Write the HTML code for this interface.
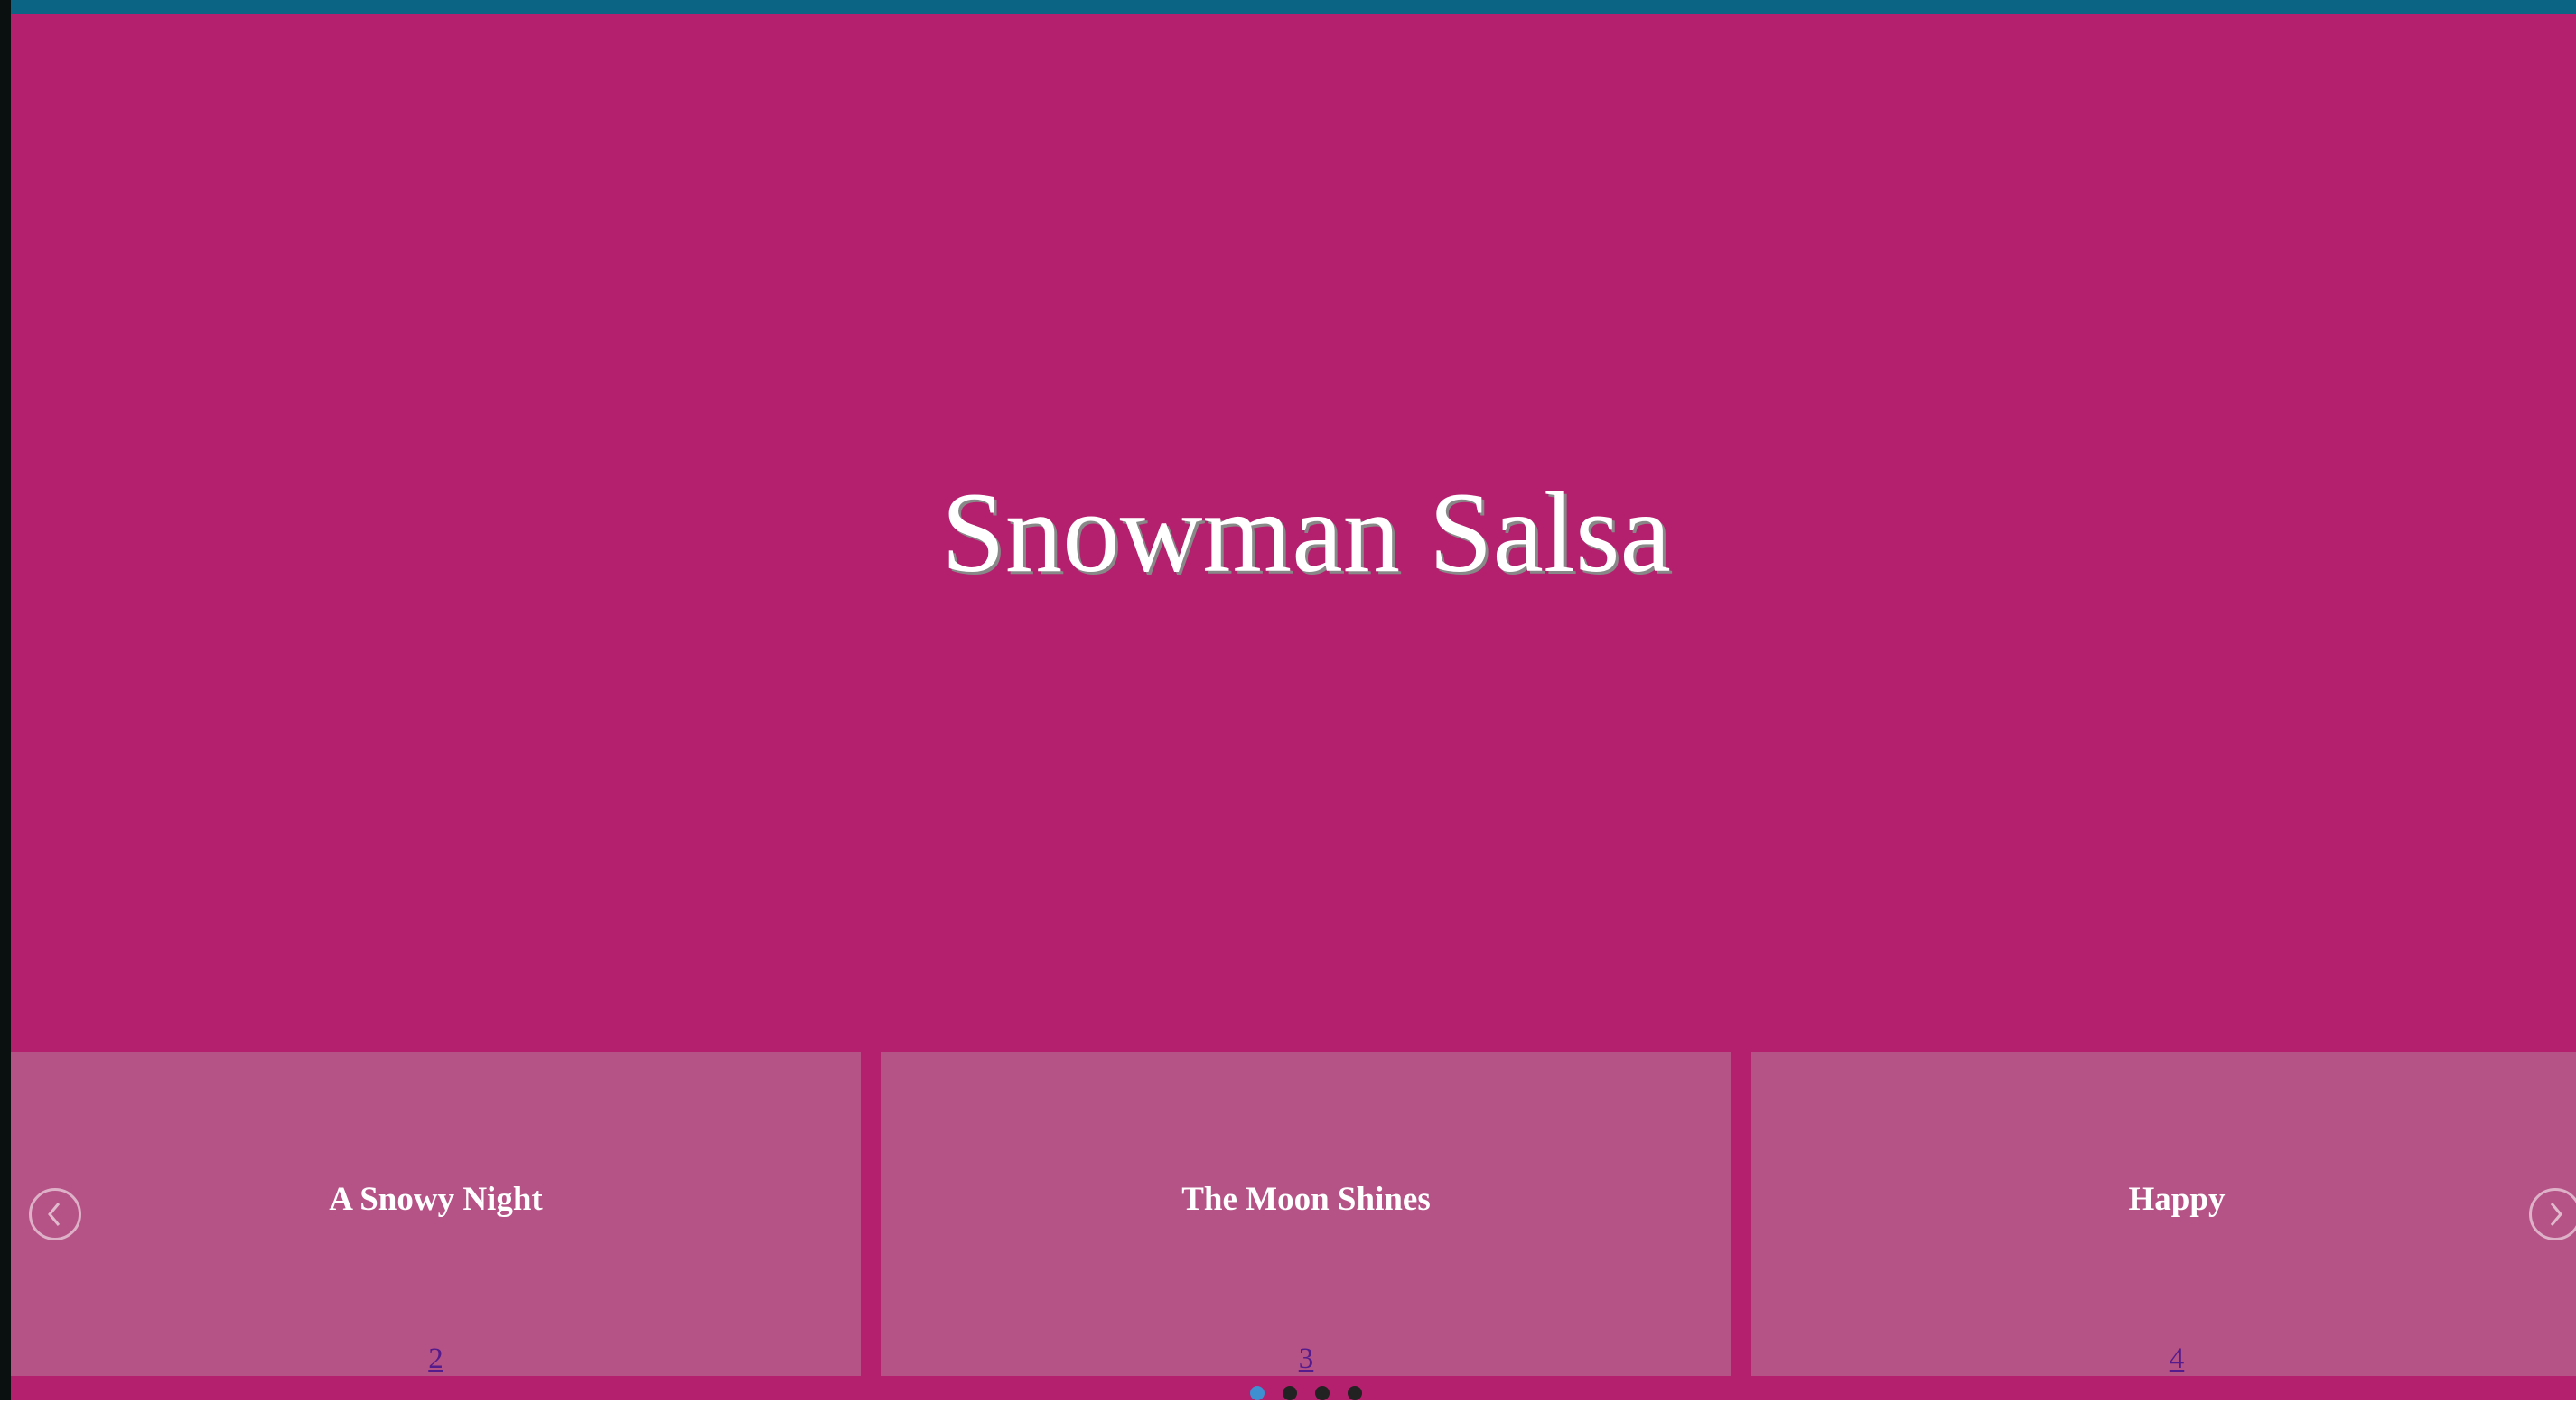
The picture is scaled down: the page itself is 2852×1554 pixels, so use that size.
<!DOCTYPE html>
<html><head><meta charset="utf-8"><style>
html,body{margin:0;padding:0;width:2852px;height:1554px;overflow:hidden;background:#fff;position:relative;font-family:"Liberation Serif",serif}
.blk{position:absolute;left:0;top:0;width:12px;height:1550px;background:#0a0f10}
.top{position:absolute;left:12px;top:0;right:0;height:15px;background:#0b6483;border-bottom:1px solid #a9b4c4}
.hero{position:absolute;left:12px;top:16px;right:0;height:1534px;background:#b41f6e}
h1{position:absolute;left:0;width:2892px;top:510px;margin:0;text-align:center;font-weight:normal;font-size:127px;line-height:160px;color:#fff;text-shadow:3px 3px 0 #888}
.card{position:absolute;top:1164px;height:359px;background:#b55386}
.t{position:absolute;text-align:center;font-size:37px;font-weight:bold;color:#fff;top:1304px;line-height:48px}
.n{position:absolute;text-align:center;font-size:33px;color:#551a8b;text-decoration:underline;top:1484px;line-height:40px}
.arr{position:absolute;width:52px;height:52px;border:3px solid rgba(255,255,255,.55);border-radius:50%;top:1315px}
.arr svg{position:absolute;left:0;top:0}
.dot{position:absolute;top:1534px;width:16px;height:16px;border-radius:50%;background:#222}
</style></head><body>
<div class="blk"></div>
<div class="top"></div>
<div class="hero"></div>
<h1>Snowman Salsa</h1>
<div class="card" style="left:12px;width:941px"></div>
<div class="card" style="left:975px;width:942px"></div>
<div class="card" style="left:1939px;width:913px"></div>
<div class="t" style="left:12px;width:941px">A Snowy Night</div>
<div class="t" style="left:975px;width:942px">The Moon Shines</div>
<div class="t" style="left:1939px;width:942px">Happy</div>
<div class="n" style="left:12px;width:941px">2</div>
<div class="n" style="left:975px;width:942px">3</div>
<div class="n" style="left:1939px;width:942px">4</div>
<div class="arr" style="left:32px"><svg width="52" height="52"><path d="M30 14 L20 26 L30 38" fill="none" stroke="rgba(255,255,255,.6)" stroke-width="3"/></svg></div>
<div class="arr" style="left:2800px"><svg width="52" height="52"><path d="M22 14 L32 26 L22 38" fill="none" stroke="rgba(255,255,255,.6)" stroke-width="3"/></svg></div>
<div class="dot" style="left:1384px;background:#3d8fd1"></div>
<div class="dot" style="left:1420px"></div>
<div class="dot" style="left:1456px"></div>
<div class="dot" style="left:1492px"></div>
</body></html>
